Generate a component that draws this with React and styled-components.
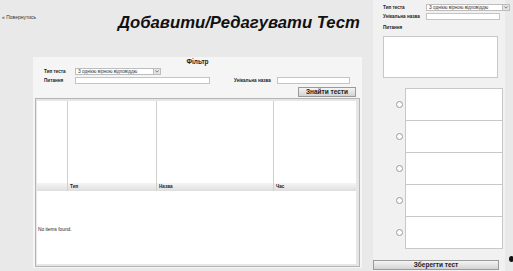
import React from 'react';
import styled, { createGlobalStyle } from 'styled-components';

const GlobalStyle = createGlobalStyle`
    html, body {
        margin: 0;
        padding: 0;
        background: #e9e9e9;
        font-family: "Liberation Sans", Arial, sans-serif;
        overflow: hidden;
    }
`;

const Page = styled.div`
    display: flex;
    width: 513px;
    height: 271px;
    overflow: hidden;
`;

const Main = styled.div`
    width: 373px;
    flex-shrink: 0;
    display: flex;
    flex-direction: column;
`;

const Header = styled.div`
    display: grid;
    grid-template-columns: 118px auto;
    height: 57px;
`;

const BackLink = styled.a`
    padding: 14px 0 0 2px;
    font-size: 5px;
    color: #333;
    text-decoration: none;
`;

const Title = styled.h1`
    margin: 13px 0 0;
    font-size: 16.7px;
    font-weight: bold;
    font-style: italic;
    color: #111;
    white-space: nowrap;
`;

const FilterPanel = styled.div`
    margin-left: 33px;
    width: 329px;
    height: 211px;
    background: #f5f5f5;
    display: flex;
    flex-direction: column;
`;

const Legend = styled.div`
    text-align: center;
    font-size: 6.5px;
    font-weight: bold;
    color: #222;
    padding-top: 1px;
    height: 10px;
`;

const FilterForm = styled.div`
    display: grid;
    grid-template-columns: 31px 135px 24px 43px 73px;
    row-gap: 2px;
    padding-left: 11px;
    align-items: center;
`;

const Label = styled.span`
    font-size: 4.6px;
    font-weight: bold;
    color: #222;
    white-space: nowrap;
`;

const Select = styled.div`
    position: relative;
    width: ${p => p.width}px;
    flex-shrink: 0;
    height: 7px;
    box-sizing: border-box;
    border: 1px solid #bdbdbd;
    background: #fff;
    font-size: 4.6px;
    line-height: 5px;
    padding-left: 2px;
    color: #333;
    white-space: nowrap;
    overflow: hidden;
`;

const Arrow = styled.span`
    position: absolute;
    right: 0;
    top: 0;
    width: 6px;
    height: 5px;
    background: #e4e4e4;
    border-left: 1px solid #bdbdbd;
    display: flex;
    align-items: center;
    justify-content: center;
`;

const Input = styled.div`
    width: ${p => p.width}px;
    height: 7px;
    box-sizing: border-box;
    border: 1px solid #c4c4c4;
    background: #fff;
`;

const ButtonRow = styled.div`
    display: flex;
    justify-content: flex-end;
    padding: 3px 6px 0 0;
`;

const GreyButton = styled.button`
    width: ${p => p.width}px;
    height: 10px;
    padding: 0;
    box-sizing: border-box;
    border: 1px solid #9a9a9a;
    background: linear-gradient(#f4f4f4, #d3d3d3);
    font-family: "Liberation Sans", Arial, sans-serif;
    font-size: 6.5px;
    font-weight: bold;
    color: #222;
    line-height: 8px;
`;

const GridBox = styled.div`
    margin: 1px 2px 0;
    height: 169px;
    box-sizing: border-box;
    border: 1px solid #b5b5b5;
    background: #e6e6e6;
    padding: 2px 3px 2px 1px;
    display: flex;
    flex-direction: column;
`;

const Columns = styled.div`
    display: grid;
    grid-template-columns: 30px 89px 117px 1fr;
    height: 90px;
    background: #fff;
`;

const Column = styled.div`
    border-left: ${p => (p.first ? 'none' : '1px solid #cfcfcf')};
    display: flex;
    flex-direction: column;
    justify-content: flex-end;
`;

const HeadCell = styled.div`
    height: 8px;
    background: linear-gradient(#f5f5f5, #dedede);
    font-size: 4.6px;
    font-weight: bold;
    color: #222;
    padding-left: 2px;
    line-height: 8px;
`;

const EmptyBody = styled.div`
    flex: 1;
    background: #fff;
    display: flex;
    align-items: center;
    padding: 4px 0 0 1px;
    font-size: 4.8px;
    color: #222;
`;

const Sidebar = styled.div`
    width: 132px;
    flex-shrink: 0;
    height: 271px;
    background: #f1f1f1;
    position: relative;
    display: flex;
    flex-direction: column;
`;

const SideForm = styled.div`
    display: grid;
    grid-template-columns: 43px 89px;
    row-gap: 2px;
    padding: 4px 0 0 10px;
    align-items: center;
`;

const SideLabel = styled(Label)`
    padding-top: 5px;
    padding-left: 10px;
`;

const TextArea = styled.div`
    margin: 6px 0 0 10px;
    width: 115px;
    height: 47px;
    box-sizing: border-box;
    border: 1px solid #c8c8c8;
    background: #fff;
`;

const Answers = styled.div`
    margin-top: 10px;
    display: flex;
    flex-direction: column;
`;

const AnswerRow = styled.div`
    display: flex;
    align-items: center;
    height: 32px;
`;

const Radio = styled.span`
    width: 5px;
    height: 5px;
    border: 1px solid #9a9a9a;
    border-radius: 50%;
    background: #fff;
    margin: 0 2px 0 23px;
`;

const AnswerBox = styled.div`
    width: 98px;
    height: ${p => (p.last ? 33 : 32)}px;
    box-sizing: border-box;
    border: 1px solid #c8c8c8;
    border-bottom: ${p => (p.last ? '1px solid #c8c8c8' : 'none')};
    background: #fff;
    align-self: flex-start;
`;

const SaveRow = styled.div`
    margin-top: 5px;
`;

const Dot = styled.span`
    position: absolute;
    right: -9px;
    top: 256px;
    width: 5px;
    height: 6px;
    border-radius: 50%;
    background: #111;
`;

const SelectArrow = () => (
    <svg width="4" height="3" viewBox="0 0 4 3">
        <path d="M0.5 0.5 L2 2.2 L3.5 0.5" stroke="#555" strokeWidth="0.7" fill="none" />
    </svg>
);

const TestSelect = ({ width }) => (
    <Select width={width}>
        З однією вірною відповіддю
        <Arrow><SelectArrow /></Arrow>
    </Select>
);

const answers = [0, 1, 2, 3, 4];

export default function App() {
    return (
        <Page>
            <GlobalStyle />
            <Main>
                <Header>
                    <BackLink href="#">« Повернутись</BackLink>
                    <Title>Добавити/Редагувати Тест</Title>
                </Header>
                <FilterPanel>
                    <Legend>Фільтр</Legend>
                    <FilterForm>
                        <Label>Тип теста</Label>
                        <TestSelect width={86} />
                        <span />
                        <span />
                        <span />
                        <Label>Питання</Label>
                        <Input width={135} />
                        <span />
                        <Label>Унікальна назва</Label>
                        <Input width={73} />
                    </FilterForm>
                    <ButtonRow>
                        <GreyButton width={58}>Знайти тести</GreyButton>
                    </ButtonRow>
                    <GridBox>
                        <Columns>
                            <Column first><HeadCell /></Column>
                            <Column><HeadCell>Тип</HeadCell></Column>
                            <Column><HeadCell>Назва</HeadCell></Column>
                            <Column><HeadCell>Час</HeadCell></Column>
                        </Columns>
                        <EmptyBody>No items found.</EmptyBody>
                    </GridBox>
                </FilterPanel>
            </Main>
            <Sidebar>
                <SideForm>
                    <Label>Тип теста</Label>
                    <TestSelect width={84} />
                    <Label>Унікальна назва</Label>
                    <Input width={74} />
                </SideForm>
                <SideLabel>Питання</SideLabel>
                <TextArea />
                <Answers>
                    {answers.map(i => (
                        <AnswerRow key={i}>
                            <Radio />
                            <AnswerBox last={i === answers.length - 1} />
                        </AnswerRow>
                    ))}
                </Answers>
                <SaveRow>
                    <GreyButton width={126}>Зберегти тест</GreyButton>
                </SaveRow>
                <Dot />
            </Sidebar>
        </Page>
    );
}
